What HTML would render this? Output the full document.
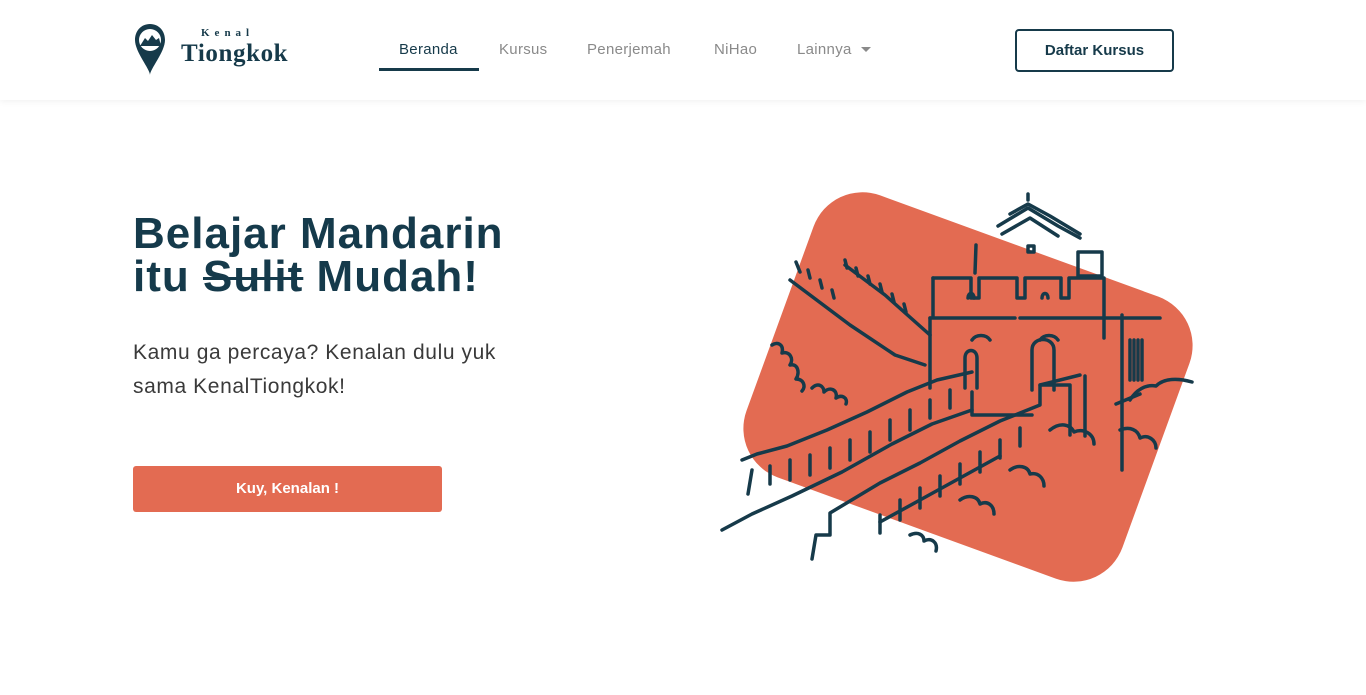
<!DOCTYPE html>
<html><head><meta charset="utf-8">
<style>
*{margin:0;padding:0;box-sizing:border-box}
body{width:1366px;height:695px;overflow:hidden;background:#fff;font-family:"Liberation Sans",sans-serif;color:#163a4a;position:relative}
.hdr{position:absolute;left:0;top:0;width:1366px;height:100px;background:#fff;box-shadow:0 2px 6px rgba(0,0,0,0.05)}
.nav a{position:absolute;top:41px;font-size:15px;color:#8a8a8a;text-decoration:none;letter-spacing:0.3px}
.under{position:absolute;left:379px;top:68px;width:100px;height:3px;background:#163a4a}
.btn1{position:absolute;left:1015px;top:29px;width:159px;height:43px;border:2px solid #163a4a;border-radius:4px;font-weight:bold;font-size:15px;text-align:center;line-height:39px;color:#163a4a}
h1{position:absolute;left:133px;top:212px;font-size:44px;line-height:43px;font-weight:bold;color:#153a4b;letter-spacing:1px}
h1 s{text-decoration-thickness:3px}
p{position:absolute;left:133px;top:336px;font-size:21px;line-height:34px;color:#3a3a3a;letter-spacing:0.6px}
.btn2{position:absolute;left:133px;top:466px;width:309px;height:46px;background:#e36b52;border-radius:3px;color:#fff;font-weight:bold;font-size:15px;text-align:center;line-height:46px}
.blob{position:absolute;left:768px;top:237px;width:400px;height:300px;background:#e36b52;border-radius:52px;transform:rotate(20deg)}
svg{position:absolute;left:0;top:0}
</style></head><body>
<div class="hdr"></div>
<svg width="60" height="70" style="left:133px;top:22px" viewBox="0 0 60 70">
<path d="M17 2C8 2 2 9 2 18c0 12 15 29 15 35c0-6 15-23 15-35C32 9 26 2 17 2z" fill="#163a4a"/>
<circle cx="17" cy="18" r="11" fill="#fff"/>
<path d="M7 24l5-8 3 3 4-6 4 5 3-2 2 8z" fill="#163a4a"/>
</svg>
<div style="position:absolute;left:201px;top:27px;font-family:'Liberation Serif',serif;font-weight:bold;font-size:11px;letter-spacing:5px;color:#163a4a">Kenal</div>
<div style="position:absolute;left:181px;top:40px;font-family:'Liberation Serif',serif;font-weight:bold;font-size:25px;letter-spacing:0.6px;color:#163a4a">Tiongkok</div>
<div class="nav">
<a style="left:399px;color:#163a4a">Beranda</a>
<a style="left:499px">Kursus</a>
<a style="left:587px">Penerjemah</a>
<a style="left:714px">NiHao</a>
<a style="left:797px">Lainnya</a>
</div>
<div style="position:absolute;left:861px;top:47px;width:0;height:0;border-left:5px solid transparent;border-right:5px solid transparent;border-top:5px solid #8a8a8a"></div>
<div class="under"></div>
<div class="btn1">Daftar Kursus</div>
<h1>Belajar Mandarin<br>itu <s>Sulit</s> Mudah!</h1>
<p>Kamu ga percaya? Kenalan dulu yuk<br>sama KenalTiongkok!</p>
<div class="btn2">Kuy, Kenalan !</div>
<div class="blob"></div>
<svg width="1366" height="695" viewBox="0 0 1366 695" fill="none" stroke="#163a4a" stroke-width="3.5" stroke-linecap="round" stroke-linejoin="round">
<path d="M998 226l30-18 30 18 22 12M1002 234l28-16 28 18M1010 214l18-10 22 12 30 18M1028 200v-6"/>
<path d="M1078 252h24v24h-24z"/>
<rect x="1028" y="246" width="6" height="6"/>
<path d="M976 245l-1 28"/>
<path d="M933 278h38v20h8v-20h38v20h8v-20h36v20h8v-20h35v60"/>
<path d="M933 278v38"/>
<path d="M968 298c0-6 6-6 6 0M1042 298c0-6 6-6 6 0"/>
<path d="M930 318h85M1020 318h95M1115 318h45"/>
<path d="M930 318v70M972 340c4-6 14-6 18 0M1040 340c4-6 14-6 18 0"/>
<path d="M965 388v-30c0-10 12-10 12 0v30M1032 390v-40c0-14 22-14 22 0v40"/>
<path d="M1122 315v155M1130 340v40M1134 340v40M1138 340v40M1142 340v40"/>
<path d="M1116 404l24-10"/>
<path d="M972 392v23h60"/>
<path d="M972 372l-35 8-30 12-40 20-40 18-40 16-30 8-15 6"/>
<path d="M752 470l-4 24M770 466v18M790 460v20M810 455v20M830 448v20M850 440v20M870 432v20M890 420v20M910 410v20M930 400v18M950 390v18"/>
<path d="M972 410l-40 14-40 20-50 28-50 24-40 18-30 16"/>
<path d="M1080 375l-40 10v20l-40 16-40 20-40 22-40 20-30 18-20 12v22h-14l-4 24"/>
<path d="M1040 385h30v50M1085 376v60"/>
<path d="M880 515v18M900 500v20M920 488v20M940 476v20M960 464v20M980 452v20M1000 440v18M1020 428v18"/>
<path d="M1000 456l-40 22-40 22-40 22"/>
<path d="M790 280l60 45 45 30 30 10M845 265l40 30 45 40"/>
<path d="M796 262l4 10M808 270l2 8M820 280l2 8M832 290l2 8M845 260l2 8M856 268l2 8M868 276l2 8M880 284l2 8M892 294l2 8M904 304l2 8"/>
<path d="M772 345c6-4 12 0 10 8c8-2 12 6 8 12c8-2 10 8 6 14c8 0 10 8 6 12M812 388c6-6 12-2 12 4c6-6 14-2 12 6c6-4 12 0 10 6"/>
<path d="M1130 400c6-10 16-16 26-14c8-8 22-8 36-4M1120 430c10-4 18 0 20 8c8-4 16 2 16 10M1050 430c10-8 20-6 24 2c10-4 20 2 20 12M1010 470c8-6 18-4 20 4c8-2 14 4 14 12M960 500c8-6 18-4 20 4c8-4 14 2 14 10M910 535c8-4 14 0 14 6c8-4 14 2 12 10"/>
</svg>
</body></html>
